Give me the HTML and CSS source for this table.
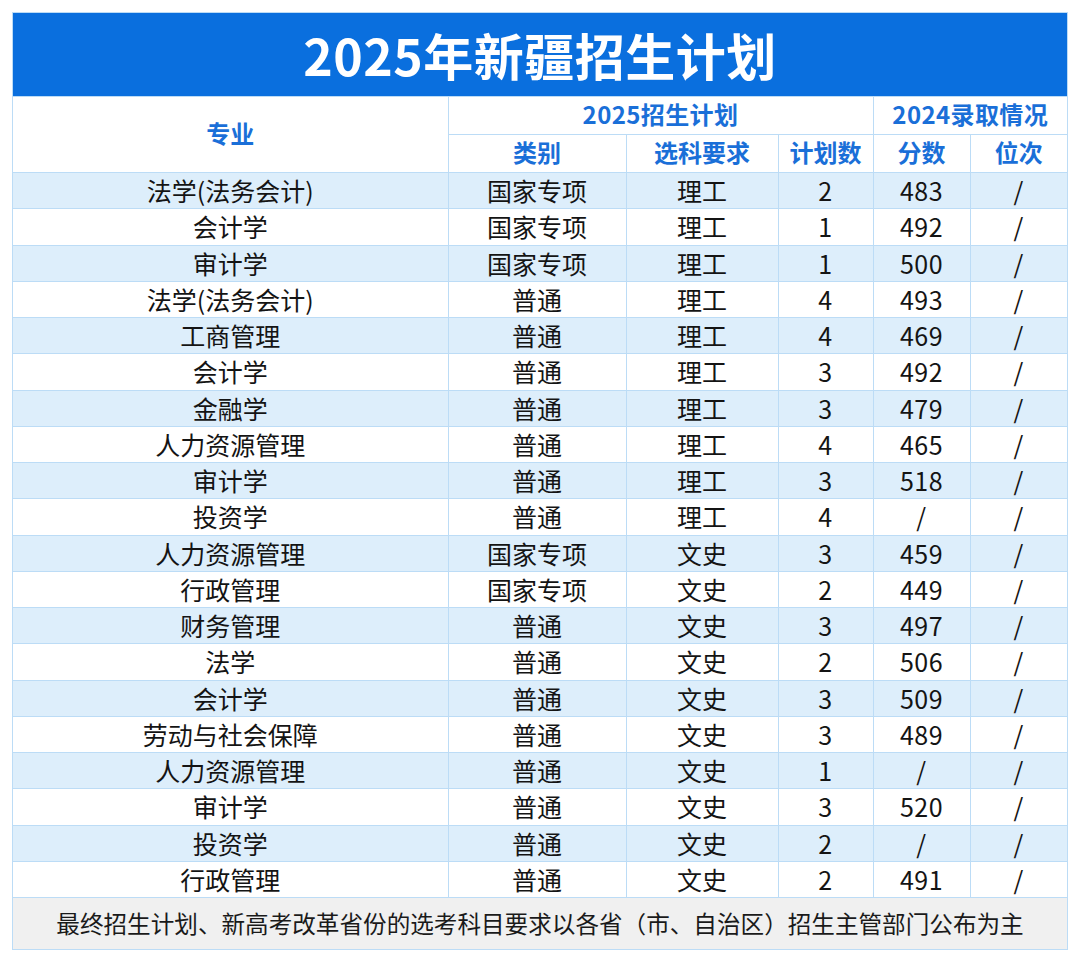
FILE: index.html
```html
<!DOCTYPE html>
<html lang="zh-CN">
<head>
<meta charset="utf-8">
<title>2025年新疆招生计划</title>
<link rel="stylesheet" href="styles.css">
</head>
<body>
<div class="sheet">
  <div class="title">2025年新疆招生计划</div>
  <table class="plan">
    <colgroup>
      <col class="c-major"><col class="c-type"><col class="c-subj"><col class="c-num"><col class="c-score"><col class="c-rank">
    </colgroup>
    <thead>
      <tr class="h1">
        <th rowspan="2">专业</th>
        <th colspan="3">2025招生计划</th>
        <th colspan="2">2024录取情况</th>
      </tr>
      <tr class="h2">
        <th>类别</th><th>选科要求</th><th>计划数</th><th>分数</th><th>位次</th>
      </tr>
    </thead>
    <tbody>
      <tr><td>法学(法务会计)</td><td>国家专项</td><td>理工</td><td>2</td><td>483</td><td>/</td></tr>
      <tr><td>会计学</td><td>国家专项</td><td>理工</td><td>1</td><td>492</td><td>/</td></tr>
      <tr><td>审计学</td><td>国家专项</td><td>理工</td><td>1</td><td>500</td><td>/</td></tr>
      <tr><td>法学(法务会计)</td><td>普通</td><td>理工</td><td>4</td><td>493</td><td>/</td></tr>
      <tr><td>工商管理</td><td>普通</td><td>理工</td><td>4</td><td>469</td><td>/</td></tr>
      <tr><td>会计学</td><td>普通</td><td>理工</td><td>3</td><td>492</td><td>/</td></tr>
      <tr><td>金融学</td><td>普通</td><td>理工</td><td>3</td><td>479</td><td>/</td></tr>
      <tr><td>人力资源管理</td><td>普通</td><td>理工</td><td>4</td><td>465</td><td>/</td></tr>
      <tr><td>审计学</td><td>普通</td><td>理工</td><td>3</td><td>518</td><td>/</td></tr>
      <tr><td>投资学</td><td>普通</td><td>理工</td><td>4</td><td>/</td><td>/</td></tr>
      <tr><td>人力资源管理</td><td>国家专项</td><td>文史</td><td>3</td><td>459</td><td>/</td></tr>
      <tr><td>行政管理</td><td>国家专项</td><td>文史</td><td>2</td><td>449</td><td>/</td></tr>
      <tr><td>财务管理</td><td>普通</td><td>文史</td><td>3</td><td>497</td><td>/</td></tr>
      <tr><td>法学</td><td>普通</td><td>文史</td><td>2</td><td>506</td><td>/</td></tr>
      <tr><td>会计学</td><td>普通</td><td>文史</td><td>3</td><td>509</td><td>/</td></tr>
      <tr><td>劳动与社会保障</td><td>普通</td><td>文史</td><td>3</td><td>489</td><td>/</td></tr>
      <tr><td>人力资源管理</td><td>普通</td><td>文史</td><td>1</td><td>/</td><td>/</td></tr>
      <tr><td>审计学</td><td>普通</td><td>文史</td><td>3</td><td>520</td><td>/</td></tr>
      <tr><td>投资学</td><td>普通</td><td>文史</td><td>2</td><td>/</td><td>/</td></tr>
      <tr><td>行政管理</td><td>普通</td><td>文史</td><td>2</td><td>491</td><td>/</td></tr>
    </tbody>
    <tfoot>
      <tr><td colspan="6">最终招生计划、新高考改革省份的选考科目要求以各省（市、自治区）招生主管部门公布为主</td></tr>
    </tfoot>
  </table>
</div>
</body>
</html>
```

FILE: styles.css
```css
html, body {
  margin: 0;
  padding: 0;
  background: #ffffff;
}
body {
  padding: 12px;
  font-family: "Noto Sans CJK SC", "Noto Sans", sans-serif;
  color: #141414;
}
.sheet {
  width: 1056px;
  border: 1px solid #bcdcf6;
  box-sizing: border-box;
}
.title {
  height: 83px;
  background: #0a6fde;
  color: #ffffff;
  font-weight: 700;
  font-size: 50px;
  line-height: 83px;
  text-align: center;
  letter-spacing: 0.5px;
}
.plan {
  width: 100%;
  border-collapse: collapse;
  table-layout: fixed;
}
.c-major { width: 435px; }
.c-type { width: 178px; }
.c-subj { width: 152px; }
.c-num { width: 95px; }
.c-score { width: 97px; }
.c-rank { width: 97px; }
.plan th, .plan td {
  border: 1px solid #bcdcf6;
  padding: 0;
  text-align: center;
  vertical-align: middle;
  white-space: nowrap;
}
.plan tr > :first-child { border-left: none; }
.plan tr > :last-child { border-right: none; }
.plan th {
  color: #1a6fd8;
  font-weight: 700;
  font-size: 24px;
  line-height: 1;
  background: #ffffff;
  padding-bottom: 3px;
}
.h1 th { height: 34px; }
.h1 th:first-child { padding-bottom: 4px; }
.h1 th + th { letter-spacing: 0.4px; }
.h2 th { height: 34px; }
.plan tbody td {
  height: 36.25px;
  font-size: 25px;
  line-height: 25px;
  box-sizing: border-box;
}
.plan tbody td + td + td + td { letter-spacing: 0.5px; }
.plan tbody tr:nth-child(odd) td { background: #ddeefb; }
.plan tbody tr:nth-child(even) td { background: #ffffff; }
.plan tfoot td {
  height: 51px;
  background: #f0f0f0;
  font-size: 23.6px;
  line-height: 1;
  color: #1a1a1a;
  border-bottom: none;
}
```
